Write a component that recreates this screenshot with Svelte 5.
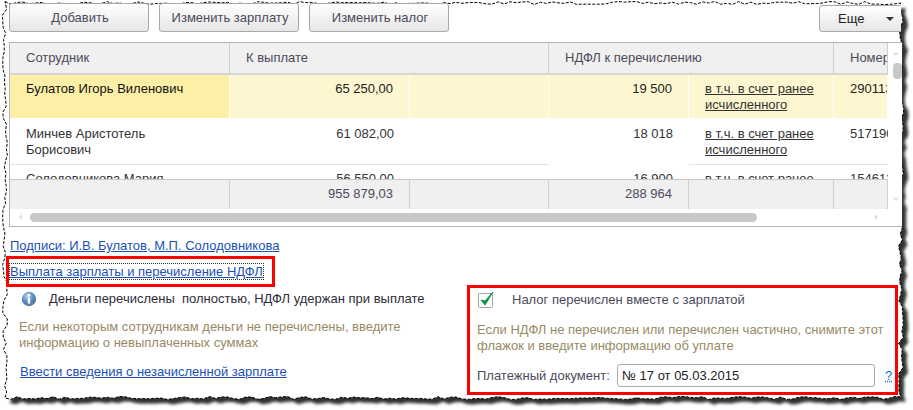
<script>
  const rows = [
    { name: "Булатов Игорь Виленович", pay: "65 250,00", tax: "19 500", num: "290113", active: true },
    { name: "Минчев Аристотель Борисович", pay: "61 082,00", tax: "18 018", num: "517190" },
    { name: "Солодовникова Мария Петровна", pay: "56 550,00", tax: "16 900", num: "154613" }
  ];

  // torn paper outline, same every run
  let seed = 7;
  function rnd() {
    seed = (seed * 16807) % 2147483647;
    return seed / 2147483647;
  }
  function edge(x1, y1, x2, y2, amp) {
    const len = Math.hypot(x2 - x1, y2 - y1);
    const n = Math.floor(len / 6);
    let out = [];
    for (let i = 0; i < n; i++) {
      const t = i / n;
      const j = (rnd() - 0.5) * amp;
      out.push(y1 === y2
        ? `${(x1 + (x2 - x1) * t).toFixed(1)} ${(y1 + j).toFixed(1)}`
        : `${(x1 + j).toFixed(1)} ${(y1 + (y2 - y1) * t).toFixed(1)}`);
    }
    return out;
  }
  const torn = "M" + [
    ...edge(5, 3, 901, 3, 3),
    ...edge(901, 3, 901, 398, 5),
    ...edge(901, 398, 5, 398, 3),
    ...edge(5, 398, 5, 3, 5)
  ].join(" L") + " Z";
</script>

<div class="page">
  <svg class="paper" width="913" height="410" viewBox="0 0 913 410">
    <defs>
      <filter id="blur" x="-5%" y="-5%" width="110%" height="110%">
        <feGaussianBlur stdDeviation="1.8" />
      </filter>
    </defs>
    <path d={torn} fill="#333" filter="url(#blur)" transform="translate(5 5)" />
    <path d={torn} fill="#fff" stroke="#000" stroke-width="1" stroke-dasharray="3 1.5" />
  </svg>

  <div class="toolbar">
    <button class="btn">Добавить</button>
    <button class="btn">Изменить зарплату</button>
    <button class="btn">Изменить налог</button>
    <button class="btn more">Еще <span class="caret"></span></button>
  </div>

  <div class="table">
    <div class="head cols">
      <div>Сотрудник</div>
      <div class="span2">К выплате</div>
      <div class="span2">НДФЛ к перечислению</div>
      <div>Номер</div>
    </div>
    <div class="body">
      {#each rows as r}
        <div class="cols row" class:active={r.active}>
          <div class="name">{r.name}</div>
          <div class="num lined">{r.pay}</div>
          <div class="lined"></div>
          <div class="num">{r.tax}</div>
          <div class="lined"><a href="#top" class="dark">в т.ч. в счет ранее исчисленного</a></div>
          <div class="lined code">{r.num}</div>
        </div>
      {/each}
    </div>
    <div class="foot cols">
      <div></div>
      <div class="num">955 879,03</div>
      <div></div>
      <div class="num">288 964</div>
      <div></div>
      <div></div>
    </div>
    <div class="hscroll">
      <span class="arrow left"></span>
      <div class="thumb"></div>
      <span class="arrow right"></span>
    </div>
    <div class="vscroll">
      <span class="up"></span>
      <div class="vthumb"></div>
      <span class="down"></span>
    </div>
  </div>

  <div class="bottom">
    <div class="col-left">
      <a href="#top" class="sign">Подписи: И.В. Булатов, М.П. Солодовникова</a>
      <div class="red red-link">
        <a href="#top" class="focused">Выплата зарплаты и перечисление НДФЛ</a>
      </div>
      <div class="info">
        <svg width="16" height="16" viewBox="0 0 16 16">
          <defs>
            <radialGradient id="ball" cx="0.4" cy="0.3" r="0.8">
              <stop offset="0" stop-color="#b9d2ea" />
              <stop offset="0.55" stop-color="#4f86bf" />
              <stop offset="1" stop-color="#6b7280" />
            </radialGradient>
          </defs>
          <circle cx="8" cy="8" r="7.2" fill="url(#ball)" />
          <circle cx="8" cy="4.4" r="1.3" fill="#fff" />
          <rect x="6.8" y="6.6" width="2.4" height="6" fill="#fff" />
        </svg>
        <span>Деньги перечислены&nbsp; полностью, НДФЛ удержан при выплате</span>
      </div>
      <p class="hint left-hint">Если некоторым сотрудникам деньги не перечислены, введите информацию о невыплаченных суммах</p>
      <a href="#top" class="enter">Ввести сведения о незачисленной зарплате</a>
    </div>

    <div class="red red-box">
      <div class="check">
        <svg width="18" height="19" viewBox="0 0 18 19">
          <rect x="0.5" y="3.5" width="14" height="14" rx="1" fill="#fff" stroke="#a5a5a5" />
          <path d="M3 10 L7 15 L15 2 L7 11 Z" fill="#129447" stroke="#129447" stroke-width="1" stroke-linejoin="round" />
        </svg>
        <span>Налог перечислен вместе с зарплатой</span>
      </div>
      <p class="hint">Если НДФЛ не перечислен или перечислен частично, снимите этот флажок и введите информацию об уплате</p>
      <div class="doc">
        <label for="doc">Платежный документ:</label>
        <input id="doc" value="№ 17 от 05.03.2015" />
        <a href="#top" class="help">?</a>
      </div>
    </div>
  </div>
</div>

<style>
  :global(body) {
    margin: 0;
    background: #fff;
  }
  .page {
    position: relative;
    width: 913px;
    height: 410px;
    overflow: hidden;
    font-family: "Liberation Sans", Arial, sans-serif;
    font-size: 13px;
    line-height: 16px;
    color: #4c4a5a;
  }
  .paper {
    position: absolute;
    left: 0;
    top: 0;
  }
  .toolbar {
    position: relative;
    display: flex;
    gap: 10px;
    width: 892px;
    margin-left: 9px;
    padding-top: 3px;
    height: 29px;
    overflow: hidden;
  }
  .btn {
    width: 140px;
    height: 29px;
    border: 1px solid #a9a9a9;
    border-radius: 3px;
    background: linear-gradient(#ffffff, #e6e6e6);
    font: inherit;
    color: inherit;
    padding: 0 0 0 2px;
  }
  .more {
    width: 90px;
    height: 27px;
    margin-left: auto;
    margin-right: -8px;
    margin-top: 2px;
    color: #222;
    text-align: left;
    padding-left: 18px;
  }
  .caret {
    display: inline-block;
    margin-left: 18px;
    vertical-align: 2px;
    border-left: 4px solid transparent;
    border-right: 4px solid transparent;
    border-top: 4px solid #333;
  }
  .table {
    position: relative;
    width: 892px;
    margin: 10px 0 0 9px;
    height: 183px;
    border-top: 1px solid #b4b4b4;
    border-bottom: 1px solid #b4b4b4;
    border-left: 1px solid #b4b4b4;
    box-sizing: content-box;
    overflow: hidden;
  }
  .cols {
    display: grid;
    grid-template-columns: 220px 180px 139px 140px 145px 54px;
    width: 878px;
  }
  .span2 {
    grid-column: span 2;
  }
  .head {
    height: 30px;
    background: #f0f0f0;
    border-bottom: 2px solid #d6d6d6;
    box-sizing: content-box;
  }
  .head > div {
    padding: 7px 16px;
    white-space: nowrap;
    overflow: hidden;
    border-right: 1px solid #cfcfcf;
  }
  .body {
    height: 105px;
    overflow: hidden;
  }
  .row {
    height: 45px;
    color: #333;
  }
  .row > div {
    padding: 6px 16px;
    box-sizing: border-box;
    overflow: hidden;
  }
  .lined,
  .name {
    border-bottom: 1px solid #e4e4e4;
  }
  .row.active > div {
    background: #fdf6d0;
    border-bottom: 2px solid #fff;
    border-right: 1px solid #fff;
    color: #222;
  }
  .row.active .name {
    background: #fdf0a6;
    color: #111;
  }
  .num {
    text-align: right;
  }
  .code {
    white-space: nowrap;
  }
  .row .name {
    padding-right: 40px;
  }
  .dark {
    color: #333;
  }
  .foot {
    height: 30px;
    background: #f0f0f0;
    border-top: 1px solid #c8c8c8;
    box-sizing: border-box;
    margin-top: -1px;
    position: relative;
  }
  .foot > div {
    padding: 6px 16px;
    border-right: 1px solid #cfcfcf;
    min-height: 29px;
    box-sizing: border-box;
  }
  .hscroll {
    position: relative;
    display: flex;
    align-items: center;
    height: 16px;
    width: 878px;
    padding: 0 25px 0 20px;
    box-sizing: border-box;
  }
  .thumb {
    width: 727px;
    height: 9px;
    border-radius: 5px;
    background: #c8c8c8;
  }
  .arrow {
    position: absolute;
    top: 5px;
    border-top: 3px solid transparent;
    border-bottom: 3px solid transparent;
  }
  .arrow.left {
    left: 9px;
    border-right: 3px solid #ddd;
  }
  .arrow.right {
    right: 10px;
    border-left: 3px solid #ddd;
  }
  .vscroll {
    position: absolute;
    right: 0;
    top: 0;
    width: 14px;
    height: 183px;
    background: #fff;
    border-bottom: 1px solid #fff;
  }
  .vthumb {
    position: absolute;
    left: 5px;
    top: 20px;
    width: 9px;
    height: 16px;
    border-radius: 4px;
    background: #c8c8c8;
  }
  .up,
  .down {
    position: absolute;
    left: 5px;
    border-left: 3px solid transparent;
    border-right: 3px solid transparent;
  }
  .up {
    top: 9px;
    border-bottom: 3px solid #ddd;
  }
  .down {
    top: 155px;
    border-top: 3px solid #ddd;
  }
  .bottom {
    position: relative;
    display: grid;
    grid-template-columns: 460px 432px;
    padding: 11px 0 0 6px;
  }
  a {
    color: #1b51b5;
    text-decoration: underline;
  }
  .sign {
    display: block;
    margin-left: 4px;
  }
  .red {
    border: 3px solid #f00;
    box-sizing: border-box;
  }
  .red-link {
    width: 269px;
    height: 31px;
    margin-top: 2px;
    padding: 5px 0 0 1px;
  }
  .focused {
    outline: 1px dotted #333;
    outline-offset: 0;
  }
  .info {
    display: flex;
    align-items: center;
    gap: 12px;
    margin: 4px 0 0 15px;
    color: #2f2d3a;
  }
  .hint {
    margin: 0;
    color: #978a66;
  }
  .left-hint {
    width: 400px;
    margin: 12px 0 0 13px;
  }
  .enter {
    display: block;
    margin: 13px 0 0 14px;
  }
  .red-box {
    margin: 47px 0 0 1px;
    width: 431px;
    height: 110px;
    padding: 2px 0 0 7px;
  }
  .check {
    display: flex;
    align-items: center;
    gap: 16px;
    margin-left: 1px;
  }
  .red-box .hint {
    margin-top: 13px;
    width: 415px;
  }
  .doc {
    display: flex;
    align-items: center;
    margin-top: 10px;
  }
  .doc label {
    width: 140px;
    color: #4c4a5a;
  }
  .doc input {
    width: 258px;
    height: 23px;
    box-sizing: border-box;
    border: 1px solid #ababab;
    border-radius: 3px;
    padding: 0 4px;
    font: inherit;
    color: #222;
    outline: none;
  }
  .help {
    margin-left: 10px;
    color: #0a7ac4;
    text-decoration: underline dotted;
  }
</style>
